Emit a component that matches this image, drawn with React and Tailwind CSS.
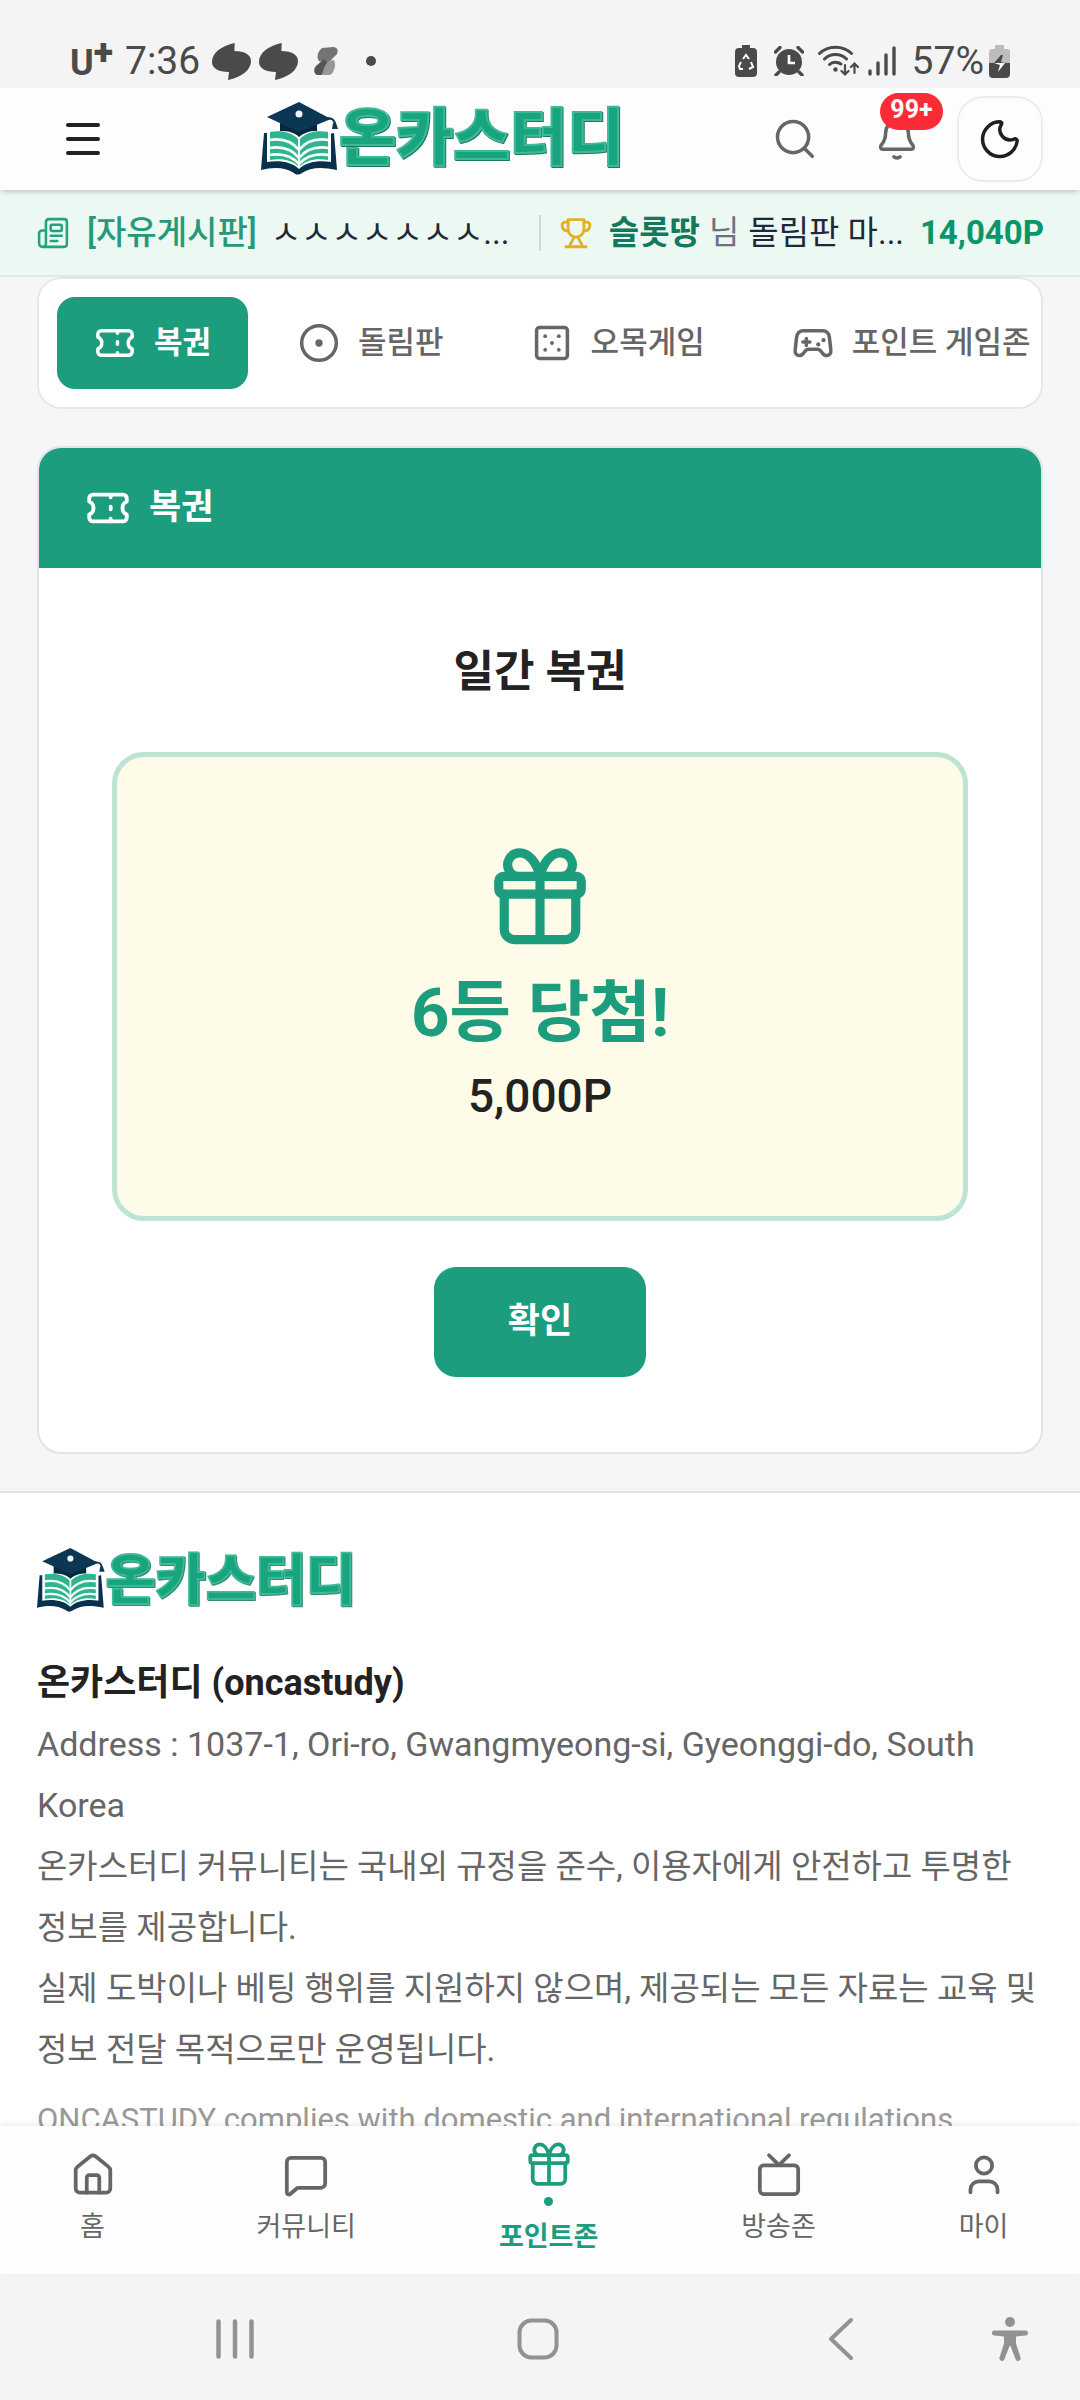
const tabs = [
  { label: "복권", Icon: TicketIcon, active: true },
  { label: "돌림판", Icon: WheelIcon },
  { label: "오목게임", Icon: DiceIcon },
  { label: "포인트 게임존", Icon: GamepadIcon },
];

const navItems = [
  { label: "홈", Icon: HomeIcon },
  { label: "커뮤니티", Icon: MessageIcon },
  { label: "포인트존", Icon: GiftIcon, active: true },
  { label: "방송존", Icon: TvIcon },
  { label: "마이", Icon: UserIcon },
];

function Icon({ className, strokeWidth = 2, children }) {
  return (
    <svg
      viewBox="0 0 24 24"
      className={`shrink-0 overflow-visible ${className}`}
      fill="none"
      stroke="currentColor"
      strokeWidth={strokeWidth}
      strokeLinecap="round"
      strokeLinejoin="round"
      aria-hidden="true"
    >
      {children}
    </svg>
  );
}

function TicketIcon(props) {
  return (
    <Icon {...props}>
      <path d="M2.2 8.6V7a2 2 0 0 1 2-2h15.6a2 2 0 0 1 2 2v1.6a3.7 3.7 0 0 0 0 6.8V17a2 2 0 0 1-2 2H4.2a2 2 0 0 1-2-2v-1.600a3.7 3.7 0 0 0 0-6.800z" />
      <path d="M13.4 5v1.4M13.4 11.3v1.4M13.4 17.6V19" />
    </Icon>
  );
}

function WheelIcon(props) {
  return (
    <Icon {...props}>
      <circle cx="12" cy="12" r="9.9" />
      <circle cx="12" cy="12" r="1.1" />
    </Icon>
  );
}

function DiceIcon(props) {
  return (
    <Icon {...props}>
      <rect x="3.2" y="3.2" width="17.6" height="17.6" rx="1.6" />
      <g fill="currentColor" stroke="none">
        <circle cx="8.1" cy="8.1" r="1.1" />
        <circle cx="15.9" cy="8.1" r="1.1" />
        <circle cx="12" cy="12" r="1.1" />
        <circle cx="8.1" cy="15.9" r="1.1" />
        <circle cx="15.9" cy="15.9" r="1.1" />
      </g>
    </Icon>
  );
}

function GamepadIcon(props) {
  return (
    <Icon {...props}>
      <path d="M6.5 5h11c2.4 0 3.6 1.5 3.9 4l.8 7c.3 2-1 3.2-2.4 3.2-1.2 0-2-.8-2.7-1.8-.8-1.2-1.3-1.8-2.6-1.8h-5c-1.3 0-1.8.6-2.6 1.8-.7 1-1.5 1.8-2.7 1.8-1.4 0-2.7-1.2-2.4-3.2l.8-7c.3-2.5 1.5-4 3.9-4z" />
      <path d="M8.2 9.4v4M6.2 11.4h4" />
      <g fill="currentColor" stroke="none">
        <circle cx="15" cy="12.8" r="1.2" />
        <circle cx="18" cy="10.4" r="1.2" />
      </g>
    </Icon>
  );
}

function GiftIcon(props) {
  return (
    <Icon {...props}>
      <rect x="3" y="7.7" width="18" height="3.9" rx="1" />
      <path d="M4.2 11.6v7.7a2.2 2.2 0 0 0 2.2 2.2h11.2a2.2 2.2 0 0 0 2.2-2.2v-7.7M12 7.7v13.8" />
      <path d="M12 7.7C11.2 4.4 9.4 2.6 7.6 2.6a2.6 2.6 0 0 0-2.3 3.9c.3.6.8 1.2 1.7 1.2M12 7.7c.8-3.3 2.6-5.1 4.4-5.1a2.6 2.6 0 0 1 2.3 3.9c-.3.6-.8 1.2-1.7 1.2" />
    </Icon>
  );
}

function HomeIcon(props) {
  return (
    <Icon {...props}>
      <path d="M3.7 10.2a2 2 0 0 1 .8-1.6l6.3-5.1a2 2 0 0 1 2.4 0l6.3 5.1a2 2 0 0 1 .8 1.6v8.7a2 2 0 0 1-2 2H5.7a2 2 0 0 1-2-2z" />
      <path d="M9 20.9v-7.2a1.2 1.2 0 0 1 1.2-1.2h3.6a1.2 1.2 0 0 1 1.2 1.2v7.2" />
    </Icon>
  );
}

function MessageIcon(props) {
  return (
    <Icon {...props}>
      <path d="M4.8 4.2h14.4a2 2 0 0 1 2 2v10.4a2 2 0 0 1-2 2H8l-3.4 2.9c-.8.7-1.8.3-1.8-.8V6.2a2 2 0 0 1 2-2z" />
    </Icon>
  );
}

function TvIcon(props) {
  return (
    <Icon {...props}>
      <rect x="2.8" y="7.9" width="18.4" height="13.7" rx="1.8" />
      <path d="M7.2 3 12 7.7 16.8 3" />
    </Icon>
  );
}

function UserIcon(props) {
  return (
    <Icon {...props}>
      <circle cx="12" cy="7.9" r="3.9" />
      <path d="M5.5 20.8v-1.3a4 4 0 0 1 4-4h5a4 4 0 0 1 4 4v1.3" />
    </Icon>
  );
}

function NewsIcon(props) {
  return (
    <Icon {...props}>
      <path d="M7 19.3V4.2a2 2 0 0 1 2-2h10.8a2 2 0 0 1 2 2v15.6a2 2 0 0 1-2 2H4.6a2.4 2.4 0 0 1-2.4-2.4v-7.2a2 2 0 0 1 2-2H7M7 19.3a2.4 2.4 0 0 1-2.4 2.5" />
      <rect x="10.4" y="6.2" width="7.8" height="4.4" rx="1" />
      <path d="M10.4 14h7.8M10.4 17.7H15" />
    </Icon>
  );
}

function TrophyIcon(props) {
  return (
    <Icon {...props}>
      <path d="M6.4 2.5h11.2v6.8a5.6 5.6 0 0 1-11.2 0z" />
      <path d="M6.4 4.3H4.3a2.1 2.1 0 0 0-2.1 2.2c0 2.4 1.6 4 4.4 4M17.6 4.3h2.1a2.1 2.1 0 0 1 2.1 2.2c0 2.4-1.6 4-4.4 4" />
      <path d="M10.4 14.8c0 2.6-2.4 3.4-2.8 6.8M13.6 14.8c0 2.6 2.4 3.4 2.8 6.8M4.8 21.7h14.4" />
    </Icon>
  );
}

function Logo({ className }) {
  return (
    <svg viewBox="0 0 361 74" className={`overflow-visible ${className}`} role="img" aria-label="온카스터디">
      {/* open book */}
      <path d="M3 31 0 68c12-3 24-3 33 3 2 2 5 2 8 0 9-6 20-6 35-3l-3-37-5 1v27c-12-1-23 0-30 6-7-6-17-7-30-6V31z" fill="#08314d" />
      <path d="M6 27c12-2 25 1 32 8 7-7 20-10 32-8v33c-13-2-25 0-32 7-7-7-19-9-32-7z" fill="#f7fdfb" />
      <path d="M9 30c11-2 22 0 29 8 7-8 18-10 29-8v28c-12-2-22 0-29 7-7-7-17-9-29-7z" fill="#2fb58d" />
      <g fill="none" stroke="#f4fdf9" strokeWidth="2.6">
        <path d="M8 38c12-2 23 1 30 10 7-9 18-12 30-10" />
        <path d="M8 46c12-2 23 1 30 10 7-9 18-12 30-10" />
        <path d="M8 53c12-2 23 1 30 9 7-8 18-11 30-9" />
        <path d="M38 36v29" strokeWidth="2" />
      </g>
      {/* graduation cap */}
      <path d="M19 20v9c8 0 14 1 19 6 6-5 11-6 18-6v-9z" fill="#072640" />
      <path d="M38 0 6 15l32 15 32-13z" fill="#0b3654" />
      <path d="M66 16c6 0 8 3 8 7" fill="none" stroke="#0b3654" strokeWidth="2" />
      <path d="M72 21h3l2 6h-6z" fill="#0b3654" />
      <circle cx="38" cy="12" r="3.5" fill="#eef7fb" />
      <text
        x="78"
        y="58"
        fontSize="62"
        className="fill-[#18a47f] stroke-[#3fba97] stroke-2 font-['Noto_Sans_CJK_KR',sans-serif] font-black drop-shadow-[1px_1px_0_#1c7a62]"
      >
        온카스터디
      </text>
    </svg>
  );
}

function ChatBlob() {
  return (
    <svg viewBox="0 0 39 37" className="h-[37px] w-[39px]" fill="#4a4a4a" aria-hidden="true">
      <path d="M22.7 0C9 3 0 10 0 19c0 6 6 10 17 10l-1 8c14-3 23-10 23-19 0-6-6-10-16.6-10z" />
    </svg>
  );
}

function StatusBar() {
  return (
    <div className="flex h-[88px] shrink-0 items-end justify-between bg-[#f4f4f4] pr-[70px] pb-2 pl-[70px] text-[#4a4a4a]">
      <div className="flex h-[38px] items-center gap-2">
        <span className="mr-1 flex items-start">
          <span className="pt-1 text-[36px] leading-[36px] font-bold">U</span>
          <span className="text-[36px] leading-[24px] font-black">+</span>
        </span>
        <span className="text-[39px] leading-[38px]">7:36</span>
        <span className="ml-1 flex gap-2">
          <ChatBlob />
          <ChatBlob />
        </span>
        <svg viewBox="0 0 24 30" className="ml-2 h-[30px] w-[24px]" aria-hidden="true">
          <path d="M8 2l11-1c5 0 6 5 3 8l-8 8-9-2C2 11 4 5 8 2z" fill="#747474" />
          <path d="M2 20l8-7 4 4-6 12H4c-4 0-5-6-2-9z" fill="#555" />
          <path d="M14 15l6-1c2 4 1 8-1 12-1 2-2 3-4 3H9c-1-3 1-8 5-14z" fill="#989898" />
        </svg>
        <span className="ml-5 size-[10px] rounded-full bg-[#4a4a4a]" />
      </div>
      <div className="flex h-[38px] items-center">
        <svg viewBox="0 0 22 32" className="h-[32px] w-[22px]" aria-hidden="true">
          <path d="M7 0h8v3h3a4 4 0 0 1 4 4v21a4 4 0 0 1-4 4H4a4 4 0 0 1-4-4V7a4 4 0 0 1 4-4h3z" fill="#4a4a4a" />
          <path d="m8 14 3-4 3 4M16 17l2 5-4 2M8 24H5l-1-3 2-4" fill="none" stroke="#fff" strokeWidth="2" />
        </svg>
        <svg viewBox="0 0 30 30" className="ml-[17px] h-[30px] w-[30px]" aria-hidden="true">
          <circle cx="15" cy="16" r="13" fill="#4a4a4a" />
          <path d="M1.5 6 6 1.5M28.5 6 24 1.5M5 26l-3 3M25 26l3 3" stroke="#4a4a4a" strokeWidth="3.4" strokeLinecap="round" />
          <path d="M15 9v8h6" fill="none" stroke="#fff" strokeWidth="2.6" />
        </svg>
        <svg viewBox="0 0 41 32" className="ml-[14px] h-[32px] w-[41px]" fill="none" stroke="#4a4a4a" strokeWidth="3" strokeLinecap="round" aria-hidden="true">
          <path d="M1.5 8.5C10 0 25 0 33.5 8.5M6.5 14c6-6 16-6 22 0M11.5 19.500c3-3 8-3 11.500-.5" />
          <circle cx="17.5" cy="24.5" r="2.2" fill="#4a4a4a" stroke="none" />
          <path d="M27 20v9.5m-3.5-3.5 3.5 3.5 3.5-3.5M36.5 28V18.500M33 22l3.500-3.500L40 22" strokeWidth="2.2" />
        </svg>
        <svg viewBox="0 0 28 30" className="ml-[9px] h-[30px] w-[28px]" stroke="#4a4a4a" strokeWidth="3.4" strokeLinecap="round" aria-hidden="true">
          <path d="M2 25v3M10 17v11M18 9v19M26 2v26" />
        </svg>
        <span className="ml-[16px] text-[39px] leading-[38px]">57%</span>
        <svg viewBox="0 0 21 33" className="ml-[5px] h-[33px] w-[21px]" aria-hidden="true">
          <path d="M6 0h9v4h3a3 3 0 0 1 3 3v11H0V7a3 3 0 0 1 3-3h3z" fill="#bcbcbc" />
          <path d="M0 18h21v11a4 4 0 0 1-4 4H4a4 4 0 0 1-4-4z" fill="#4a4a4a" />
          <path d="m12 10-7 8h11l-4-1 2-7z" fill="#4a4a4a" />
          <path d="M5 18h11l-7 9 2-7z" fill="#fff" />
        </svg>
      </div>
    </div>
  );
}

function Header() {
  return (
    <header className="relative z-10 flex h-[102px] shrink-0 items-center justify-between bg-[#fdfdfd] px-[37px] shadow-[0_4px_5px_-2px_rgba(0,0,0,0.2)]">
      <button type="button" aria-label="메뉴" className="flex h-[86px] w-[92px] items-center justify-center text-[#222]">
        <svg viewBox="0 0 34 34" className="size-[34px]" stroke="currentColor" strokeWidth="4" strokeLinecap="round">
          <path d="M2 3h30M2 17h30M2 31h30" />
        </svg>
      </button>
      <a href="#" aria-label="온카스터디">
        <Logo className="h-[74px] w-[361px]" />
      </a>
      <div className="flex items-center gap-[18px]">
        <button type="button" aria-label="검색" className="flex h-[86px] w-[84px] items-center justify-center text-[#666]">
          <Icon className="size-[42px]">
            <circle cx="10.9" cy="10.9" r="8.9" />
            <path d="m17.4 17.4 4.5 4.5" />
          </Icon>
        </button>
        <button type="button" aria-label="알림" className="relative flex h-[86px] w-[84px] items-center justify-center text-[#666]">
          <Icon className="size-[42px]">
            <path d="M12 2a6.5 6.5 0 0 0-6.5 6.5c0 3-.6 4.6-2.5 7-.8 1-.4 2.3.9 2.3h16.2c1.3 0 1.7-1.3.9-2.3-1.9-2.4-2.5-4-2.5-7A6.5 6.5 0 0 0 12 2z" />
            <path d="M10.2 22.2c.9.9 2.7.9 3.6 0" />
          </Icon>
          <span className="absolute -top-[3px] -right-1 flex h-[37px] w-[63px] items-center justify-center rounded-full bg-[#fb2c36] pb-1 text-[25px] leading-[32px] font-bold text-white">
            99+
          </span>
        </button>
        <button type="button" aria-label="다크 모드" className="flex size-[86px] items-center justify-center rounded-[26px] border-2 border-[#ececec] text-[#1f1f1f]">
          <Icon className="size-[42px]">
            <path d="M12 2.2a9.9 9.9 0 1 0 9.8 10.9c.1-1.1-1-1.5-2-.9a5.9 5.9 0 0 1-7-8.6c.4-.8.1-1.4-.8-1.4z" />
          </Icon>
        </button>
      </div>
    </header>
  );
}

function Ticker() {
  return (
    <div className="flex h-[87px] shrink-0 items-center border-b-2 border-[#e3e7e6] bg-[#ecf8f2] px-[36px] text-[33px] leading-[48px] whitespace-nowrap text-[#1f2937]">
      <div className="flex min-w-0 flex-1 items-center">
        <NewsIcon className="size-[34px] text-[#26a17f]" strokeWidth={1.8} />
        <a href="#" className="ml-[17px] font-medium text-[#26997a]">[자유게시판]</a>
        <span className="ml-[14px]">ㅅㅅㅅㅅㅅㅅㅅ...</span>
      </div>
      <span className="h-[36px] w-[2px] bg-[#cfdad6]" />
      <div className="flex min-w-0 flex-1 items-center justify-between">
        <TrophyIcon className="ml-[18px] size-[34px] text-[#e2b127]" strokeWidth={2} />
        <span className="flex gap-[9px]">
          <b className="text-[#13795b]">슬롯땅</b>
          <span className="text-[#6b7280]">님</span>
          <span>돌림판 마...</span>
        </span>
        <b className="text-[#0b9669]">14,040P</b>
      </div>
    </div>
  );
}

function GameTabs() {
  return (
    <nav className="flex gap-[13px] overflow-hidden rounded-[24px] border-2 border-[#e6e7e8] bg-white p-[18px]">
      {tabs.map(({ label, Icon: TabIcon, active }) => (
        <button
          key={label}
          type="button"
          className={`flex h-[92px] shrink-0 items-center gap-[18px] rounded-[18px] px-[37px] text-[31px] leading-[46px] whitespace-nowrap ${
            active ? "bg-[#1c9e7e] font-bold text-white" : "font-medium text-[#666]"
          }`}
        >
          <TabIcon className="size-[42px]" />
          {label}
        </button>
      ))}
    </nav>
  );
}

function LotteryCard() {
  return (
    <section className="mt-[37px] overflow-hidden rounded-[24px] border-2 border-[#e2e5e7] bg-white">
      <h1 className="flex h-[120px] items-center gap-[18px] bg-[#1c9e7e] px-[46px] text-[35px] leading-[52px] font-bold text-white">
        <TicketIcon className="size-[46px]" />
        복권
      </h1>
      <div className="flex flex-col items-center px-[73px] pt-[72px] pb-[75px]">
        <h2 className="text-[44px] leading-[64px] font-bold text-[#222]">일간 복권</h2>
        <div className="mt-[48px] flex w-full flex-col items-center rounded-[32px] border-[5px] border-[#bde3d3] bg-[#fefbe8] pt-[84px] pb-[87px]">
          <GiftIcon className="size-[110px] text-[#1c9e7e]" />
          <p className="mt-[12px] text-[67px] leading-[100px] font-bold text-[#1c9e7e]">6등 당첨!</p>
          <p className="text-[46px] leading-[66px] font-medium text-[#222]">5,000P</p>
        </div>
        <button type="button" className="mt-[46px] h-[110px] rounded-[22px] bg-[#1c9e7e] px-[74px] text-[35px] leading-[52px] font-bold text-white">
          확인
        </button>
      </div>
    </section>
  );
}

function SiteFooter() {
  return (
    <footer className="mt-[37px] border-t-2 border-[#e2e5e7] bg-white px-[37px] pt-[55px] text-[33px] leading-[61px] text-[#666]">
      <Logo className="h-[65px] w-[317px]" />
      <p className="mt-[40px] text-[36px] font-bold text-[#222]">온카스터디 (oncastudy)</p>
      <p className="text-[34px]">Address : 1037-1, Ori-ro, Gwangmyeong-si, Gyeonggi-do, South Korea</p>
      <p>
        온카스터디 커뮤니티는 국내외 규정을 준수, 이용자에게 안전하고 투명한
        <br />
        정보를 제공합니다.
      </p>
      <p>
        실제 도박이나 베팅 행위를 지원하지 않으며, 제공되는 모든 자료는 교육 및
        <br />
        정보 전달 목적으로만 운영됩니다.
      </p>
      <p className="mt-[12px] text-[31px] leading-[56px] text-[#999]">
        ONCASTUDY complies with domestic and international regulations
      </p>
    </footer>
  );
}

function BottomNav() {
  return (
    <nav className="relative z-10 flex h-[148px] shrink-0 items-center justify-around bg-[#fdfdfd] pb-[4px] shadow-[0_-2px_6px_rgba(0,0,0,0.08)]">
      {navItems.map(({ label, Icon: NavIcon, active }) => (
        <a
          key={label}
          href="#"
          className={`flex flex-col items-center text-[27px] leading-[40px] ${active ? "font-bold text-[#1c9e7e]" : "text-[#666]"}`}
        >
          <NavIcon className={active ? "size-[50px]" : "-mx-1 mb-[8px] size-[50px]"} strokeWidth={1.8} />
          {active && <span className="mt-[8px] mb-[11px] size-[9px] rounded-full bg-[#1c9e7e]" />}
          {label}
        </a>
      ))}
    </nav>
  );
}

function SystemBar() {
  return (
    <div className="flex h-[126px] shrink-0 items-center bg-[#f4f4f4] pt-[3px] pl-[84px] text-[#929292]">
      <button type="button" aria-label="최근 앱" className="flex flex-1 justify-center">
        <svg viewBox="0 0 44 44" className="size-[44px]" stroke="currentColor" strokeWidth="4.5" strokeLinecap="round">
          <path d="M5.5 4.5v35M22 4.5v35M38.5 4.5v35" />
        </svg>
      </button>
      <button type="button" aria-label="홈 화면" className="flex flex-1 justify-center">
        <svg viewBox="0 0 44 44" className="size-[44px]" fill="none" stroke="currentColor" strokeWidth="4">
          <rect x="3.500" y="3.500" width="37" height="37" rx="12" />
        </svg>
      </button>
      <button type="button" aria-label="뒤로" className="flex flex-1 justify-center">
        <svg viewBox="0 0 44 44" className="size-[44px]" fill="none" stroke="currentColor" strokeWidth="4" strokeLinecap="round" strokeLinejoin="round">
          <path d="M32 3 12 22l20 19" />
        </svg>
      </button>
      <button type="button" aria-label="접근성" className="w-[88px]">
        <svg viewBox="0 0 36 44" className="h-[44px] w-[36px]" fill="currentColor">
          <circle cx="18" cy="5" r="5" />
          <path d="M2.5 13.5h31a2.5 2.5 0 0 1 0 5L24 19.5v7l4.5 14a2.6 2.6 0 0 1-5 1.5L18.5 29h-1l-5 13a2.6 2.6 0 0 1-5-1.5l4.500-14v-7l-9.500-1a2.5 2.5 0 0 1 0-5z" />
        </svg>
      </button>
    </div>
  );
}

export default function App() {
  return (
    <div className="flex h-screen flex-col bg-[#f4f6f8] font-['Roboto','Noto_Sans_CJK_KR',sans-serif]">
      <StatusBar />
      <Header />
      <Ticker />
      <div className="min-h-0 flex-1 overflow-y-auto [scrollbar-width:none]">
        <main className="px-[37px]">
          <GameTabs />
          <LotteryCard />
        </main>
        <SiteFooter />
      </div>
      <BottomNav />
      <SystemBar />
    </div>
  );
}
